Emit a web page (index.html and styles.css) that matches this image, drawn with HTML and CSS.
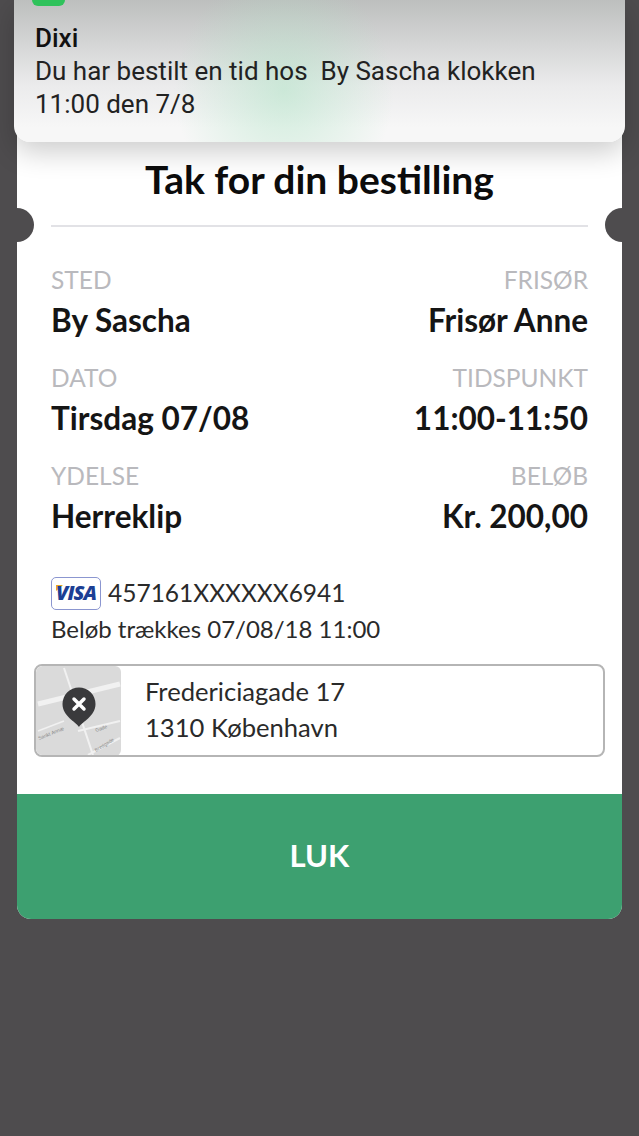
FILE: index.html
```html
<!DOCTYPE html>
<html lang="da">

<head>
  <meta charset="UTF-8" />
  <meta name="viewport" content="width=device-width, initial-scale=1.0" />
  <title>Tak for din bestilling</title>
  <link rel="stylesheet" href="styles.css">
</head>

<body>

  <div class="notifikation">
    <div class="app-ikon"></div>
    <div class="app-navn">Dixi</div>
    <p>Du har bestilt en tid hos&nbsp; By Sascha klokken<br>11:00 den 7/8</p>
  </div>

  <main class="kort">
    <h1>Tak for din bestilling</h1>
    <div class="skillelinje">
      <span class="hak venstre"></span>
      <span class="hak hoejre"></span>
    </div>

    <div class="detaljer">
      <div class="felt">
        <span class="etiket">STED</span>
        <strong>By Sascha</strong>
      </div>
      <div class="felt hoejre-felt">
        <span class="etiket">FRISØR</span>
        <strong>Frisør Anne</strong>
      </div>
      <div class="felt">
        <span class="etiket">DATO</span>
        <strong>Tirsdag 07/08</strong>
      </div>
      <div class="felt hoejre-felt">
        <span class="etiket">TIDSPUNKT</span>
        <strong>11:00-11:50</strong>
      </div>
      <div class="felt">
        <span class="etiket">YDELSE</span>
        <strong>Herreklip</strong>
      </div>
      <div class="felt hoejre-felt">
        <span class="etiket">BELØB</span>
        <strong>Kr. 200,00</strong>
      </div>
    </div>

    <div class="betaling">
      <div class="kortnummer">
        <span class="visa"><i>VISA</i></span>
        <span>457161XXXXXX6941</span>
      </div>
      <div>Beløb trækkes 07/08/18 11:00</div>
    </div>

    <div class="adresse">
      <svg class="kort-billede" width="85" height="90" viewBox="0 0 85 90">
        <rect width="85" height="90" rx="6" fill="#dadada" />
        <g stroke="#f1f1f1" fill="none">
          <path d="M2 38L84 18" stroke-width="5" />
          <path d="M28 2L57 89" stroke-width="2" />
          <path d="M42 65L84 55" stroke-width="2" />
          <path d="M2 65L28 55" stroke-width="1.5" />
          <path d="M84 72L52 89" stroke-width="2" />
        </g>
        <g class="gade-navn">
          <text transform="translate(3 74) rotate(-22)">Sankt Annæ</text>
          <text transform="translate(60 66) rotate(-20)">Gade</text>
          <text transform="translate(60 86) rotate(-32)">Bredgade</text>
        </g>
        <path d="M43 61C40 56 26.500 50 26.500 38a16.500 16.500 0 0 1 33 0C59.500 50 46 56 43 61Z" fill="#3a3a3c" />
        <path d="M38 33L48 43M48 33L38 43" stroke="#fff" stroke-width="3.500" stroke-linecap="round" />
      </svg>
      <div class="adresse-tekst">Fredericiagade 17<br>1310 København</div>
    </div>

    <button class="luk" type="button">LUK</button>
  </main>

</body>

</html>
```

FILE: styles.css
```css
html,
body {
  height: 100%;
}

body {
  margin: 0;
  height: 1136px;
  overflow: hidden;
  position: relative;
  background-color: #4e4c4e;
  font-family: "Lato", "Open Sans", sans-serif;
  color: #111;
}

.notifikation {
  position: absolute;
  top: 0;
  left: 14px;
  width: 611px;
  height: 142px;
  box-sizing: border-box;
  padding: 24px 21px 0;
  border-radius: 0 0 16px 16px;
  background:
    radial-gradient(ellipse 110px 120px at 270px 90px, rgba(176, 228, 198, 0.55), rgba(176, 228, 198, 0)),
    linear-gradient(#bdbfbe, #ebebec 60%, #f7f7f7 90%);
  box-shadow: 0 10px 28px rgba(0, 0, 0, 0.2);
  font-family: "Roboto", sans-serif;
  z-index: 2;
}

.app-ikon {
  position: absolute;
  top: 0;
  left: 18px;
  width: 33px;
  height: 6px;
  background-color: #2fc25b;
  border-radius: 0 0 6px 6px;
}

.app-navn {
  font-size: 26px;
  line-height: 28px;
  font-weight: 500;
}

.notifikation p {
  margin: 3px 0 0;
  font-size: 26px;
  line-height: 33px;
  color: #222;
}

.kort {
  width: 605px;
  height: 919px;
  margin-left: 17px;
  box-sizing: border-box;
  padding-top: 156px;
  display: flex;
  flex-direction: column;
  background-color: #fff;
  border-radius: 0 0 14px 14px;
  overflow: hidden;
  position: relative;
}

h1 {
  margin: 0;
  text-align: center;
  font-size: 39px;
  line-height: 46px;
  font-weight: 700;
  color: #0c0c0c;
}

.skillelinje {
  margin: 23px 34px 0;
  height: 2px;
  background-color: #e2e2e6;
}

.hak {
  position: absolute;
  top: 208px;
  width: 34px;
  height: 34px;
  border-radius: 50%;
  background-color: #4e4c4e;
}

.hak.venstre {
  left: -17px;
}

.hak.hoejre {
  right: -17px;
}

.detaljer {
  margin: 39px 34px 0;
  display: grid;
  grid-template-columns: 1fr 1fr;
  row-gap: 25px;
}

.felt {
  display: flex;
  flex-direction: column;
}

.hoejre-felt {
  text-align: right;
}

.etiket {
  font-size: 24.5px;
  line-height: 28px;
  color: #b9b9bd;
}

.felt strong {
  margin-top: 7px;
  font-size: 31.5px;
  line-height: 38px;
  font-weight: 700;
  color: #151515;
}

.betaling {
  margin: 40px 34px 0;
  font-size: 24px;
  line-height: 36px;
  color: #2a2a2a;
}

.kortnummer {
  display: flex;
  align-items: center;
  gap: 7px;
  font-size: 24.5px;
}

.visa {
  width: 50px;
  height: 33px;
  box-sizing: border-box;
  display: flex;
  align-items: center;
  justify-content: center;
  position: relative;
  border: 1px solid #8b96d0;
  border-radius: 5px;
}

.visa::before {
  content: "";
  position: absolute;
  top: 7px;
  left: 4px;
  border-top: 6px solid #e9a820;
  border-right: 7px solid transparent;
}

.visa i {
  font-family: "Open Sans", sans-serif;
  font-size: 20px;
  font-weight: 800;
  letter-spacing: -1px;
  color: #1c3f94;
  position: relative;
}

.adresse {
  margin: 17px 17px 0;
  height: 93px;
  box-sizing: border-box;
  display: flex;
  align-items: center;
  border: 2px solid #b5b5b5;
  border-radius: 8px;
  overflow: hidden;
}

.kort-billede {
  flex: none;
}

.gade-navn {
  font-family: "Liberation Sans", sans-serif;
  font-size: 5px;
  fill: #8a8a8a;
}

.adresse-tekst {
  margin-left: 24px;
  padding-bottom: 3px;
  font-size: 25.6px;
  line-height: 36px;
  color: #2a2a2a;
}

.luk {
  margin-top: auto;
  height: 125px;
  padding-bottom: 5px;
  border: none;
  background-color: #3da070;
  color: #fff;
  font-family: inherit;
  font-size: 31px;
  font-weight: 700;
  cursor: pointer;
}
```
